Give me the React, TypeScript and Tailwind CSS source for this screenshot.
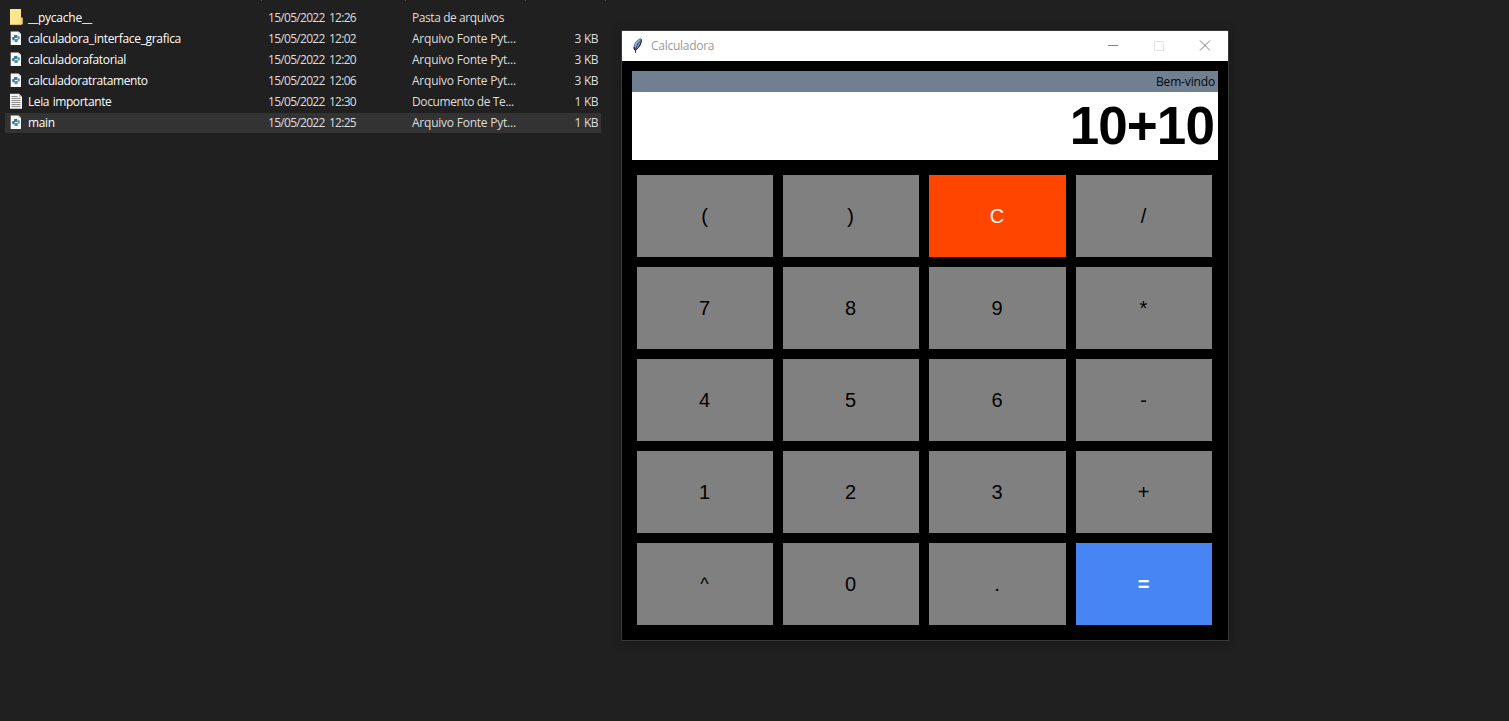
import React from "react";

type FileKind = "folder" | "python" | "text";

interface FileRow {
  name: string;
  kind: FileKind;
  date: string;
  type: string;
  size: string;
  spacing: string;
  typeSpacing: string;
  selected?: boolean;
}

const files: FileRow[] = [
  { name: "__pycache__", kind: "folder", date: "15/05/2022 12:26", type: "Pasta de arquivos", size: "", spacing: "tracking-[-0.25px]", typeSpacing: "tracking-[-0.42px]" },
  { name: "calculadora_interface_grafica", kind: "python", date: "15/05/2022 12:02", type: "Arquivo Fonte Pyt...", size: "3 KB", spacing: "tracking-[-0.31px]", typeSpacing: "tracking-[-0.23px]" },
  { name: "calculadorafatorial", kind: "python", date: "15/05/2022 12:20", type: "Arquivo Fonte Pyt...", size: "3 KB", spacing: "tracking-[-0.33px]", typeSpacing: "tracking-[-0.23px]" },
  { name: "calculadoratratamento", kind: "python", date: "15/05/2022 12:06", type: "Arquivo Fonte Pyt...", size: "3 KB", spacing: "tracking-[-0.39px]", typeSpacing: "tracking-[-0.23px]" },
  { name: "Leia importante", kind: "text", date: "15/05/2022 12:30", type: "Documento de Te...", size: "1 KB", spacing: "tracking-[-0.43px] [word-spacing:1px]", typeSpacing: "tracking-[-0.4px]" },
  { name: "main", kind: "python", date: "15/05/2022 12:25", type: "Arquivo Fonte Pyt...", size: "1 KB", spacing: "tracking-[-0.35px]", typeSpacing: "tracking-[-0.23px]", selected: true },
];

function FileIcon({ kind }: { kind: FileKind }) {
  if (kind === "folder") {
    return (
      <svg width="16" height="16" viewBox="0 0 16 16" className="-mt-px shrink-0">
        <path d="M2 0h11v9h1.500v6.500H2z" fill="#ffe58e" />
        <path d="M12.200 9.500l.8-.9h1.500v6.200l-2.300 .6z" fill="#f6d365" />
        <path d="M2 14.800h11v.9H2z" fill="#f6d980" />
      </svg>
    );
  }
  if (kind === "text") {
    return (
      <svg width="16" height="16" viewBox="0 0 16 16" className="-mt-px shrink-0">
        <path d="M2 .8h9l3 3v12H2z" fill="#f4f4f4" />
        <path d="M3.500 3.500h6M3.500 5.500h9M3.500 7.500h9M3.500 9.500h9M3.500 11.500h9M3.500 13.500h9" stroke="#8e8e8e" strokeWidth="1" />
        <path d="M11 .8v3h3z" fill="#b9b9b9" />
      </svg>
    );
  }
  return (
    <svg width="16" height="16" viewBox="0 0 16 16" className="-mt-px shrink-0">
      <path d="M2.700 1.500h7.800L13 4V15H2.700z" fill="#f7fbfc" />
      <path d="M6 4.900h3.400v3H6.700v2.300H4.600Q3.600 8.600 4.400 7H6z" fill="#3f7895" />
      <path d="M9.700 6.300h1.700q.9 1.600 0 3.200H9.700v2.400H6.600V9.100h3.100z" fill="#548da0" />
      <path d="M10.500 1.500V4H13z" fill="#c2d0d5" />
    </svg>
  );
}

function FileList() {
  return (
    <section className="w-[621px] shrink-0 text-[12px] text-[#dedede]">
      <div className="flex h-[7px]">
        <div className="h-px w-[262px] border-r border-[#555]" />
        <div className="h-px w-[144px] border-r border-[#555]" />
        <div className="h-px w-[120px] border-r border-[#555]" />
        <div className="h-px w-[80px] border-r border-[#555]" />
      </div>
      {files.map((f) => (
        <div
          key={f.name}
          className={`ml-[5px] flex h-[21px] w-[596px] items-center whitespace-nowrap ${f.selected ? "bg-[linear-gradient(transparent_1px,#333333_1px)]" : ""}`}
        >
          <div className="flex h-[21px] w-[263px] items-center pl-[3px]">
            <FileIcon kind={f.kind} />
            <span className={`ml-1 text-white ${f.spacing}`}>{f.name}</span>
          </div>
          <span className="w-[144px] tracking-[-0.7px] [word-spacing:1.8px]">{f.date}</span>
          <span className={`w-[120px] ${f.typeSpacing}`}>{f.type}</span>
          <span className="flex-1 pr-[3px] text-right tracking-[-0.5px] [word-spacing:0.5px]">{f.size}</span>
        </div>
      ))}
    </section>
  );
}

function FeatherIcon() {
  return (
    <svg width="16" height="16" viewBox="0 0 16 16">
      <path d="M10.500 .8C8 1.200 5 4.500 4 8.200L4 11l2.200 .8C9 9.500 11.300 5.500 11.400 1.500z" fill="#8ba8e0" stroke="#4a5876" strokeWidth=".8" />
      <path d="M11.200 1.500C11.800 5 9 9.500 6.200 11.600" stroke="#0c0f16" strokeWidth="1" fill="none" />
      <path d="M9.500 3.500C8 6 6.200 9 5.600 11.500V15" stroke="#1b2438" strokeWidth=".9" fill="none" />
      <path d="M4.300 9v2.500l1.300 1" stroke="#0c0f16" strokeWidth="1" fill="none" />
    </svg>
  );
}

function TitleBar() {
  return (
    <header className="flex h-[30px] items-center bg-white pl-2">
      <FeatherIcon />
      <span className="ml-[5px] flex-1 text-[12px] tracking-[-0.27px] text-[#999]">Calculadora</span>
      <div className="flex w-[138px] items-center justify-around text-[#808080]">
        <svg width="12" height="12" viewBox="0 0 12 12" stroke="currentColor" fill="none"><path d="M1 5.500h10" /></svg>
        <svg width="12" height="12" viewBox="0 0 12 12" stroke="#e4e4e4" fill="none"><path d="M1.500 1.500h9v9h-9z" /></svg>
        <svg width="12" height="12" viewBox="0 0 12 12" stroke="currentColor" fill="none"><path d="M1 .5l10 10M11 .5L1 10.500" /></svg>
      </div>
    </header>
  );
}

const keys = ["(", ")", "C", "/", "7", "8", "9", "*", "4", "5", "6", "-", "1", "2", "3", "+", "^", "0", ".", "="];

function keyStyle(key: string) {
  if (key === "C") return "bg-[#ff4500] text-white";
  if (key === "=") return "bg-[#4785f4] text-white font-bold";
  if (key === "^") return "bg-[#808080] text-black text-[18px]";
  return "bg-[#808080] text-black";
}

function Calculator() {
  return (
    <main className="mt-[30px] h-[611px] w-[608px] shrink-0 border border-[#383838] bg-black shadow-[0_2px_10px_rgba(0,0,0,0.3)]">
      <TitleBar />
      <div className="px-[10px] pt-[10px]">
        <div className="h-[21px] bg-[#708090] pr-[3px] text-right text-[12px] leading-[21px] tracking-[-0.15px] text-[#05050f]">Bem-vindo</div>
        <div className="h-[68px] bg-white pr-1 text-right font-['Liberation_Sans',Arial,sans-serif] text-[53px] font-bold leading-[68px] tracking-[-0.9px] text-black">
          10+10
        </div>
      </div>
      <div className="grid grid-cols-[136px_136px_137px_136px] auto-rows-[82px] gap-[10px] pl-[15px] pt-[15px] font-['Liberation_Sans',Arial,sans-serif] text-[20px]">
        {keys.map((key) => (
          <button key={key} className={`flex items-center justify-center pr-px ${keyStyle(key)}`}>
            {key}
          </button>
        ))}
      </div>
    </main>
  );
}

export default function App() {
  return (
    <div className="flex h-[721px] w-[1509px] items-start overflow-hidden bg-[#202020] font-['Open_Sans','Noto_Sans',sans-serif]">
      <FileList />
      <Calculator />
    </div>
  );
}
